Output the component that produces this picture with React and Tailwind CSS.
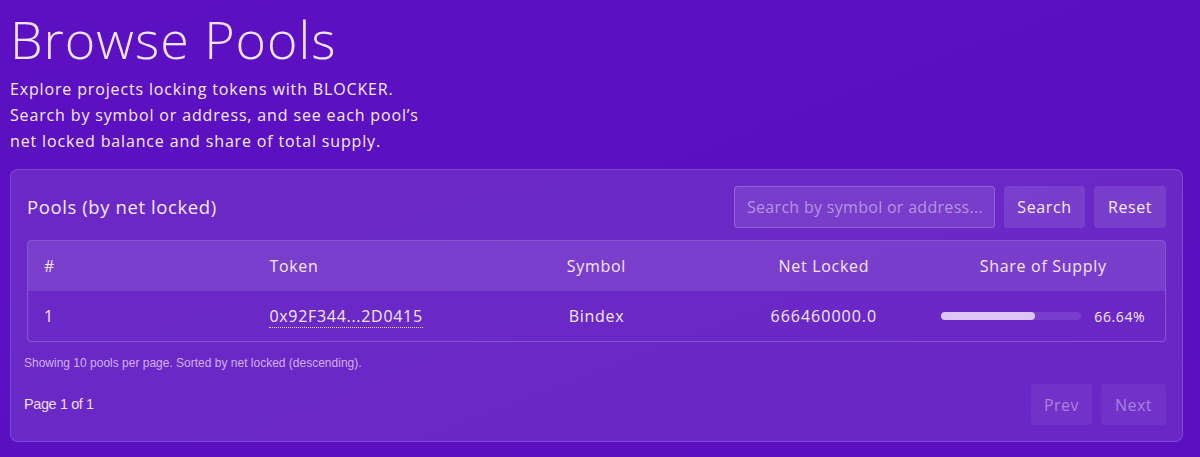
import React from 'react';

const rows = [
  { n: 1, token: '0x92F344...2D0415', symbol: 'Bindex', locked: '666460000.0', share: 66.64 },
];

export default function App() {
  return (
    <div className="min-h-screen w-full bg-gradient-to-br from-[#5c10c2] via-[#5a10c0] to-[#5b0fc0] px-[10px] pt-[8px] pb-4 text-[#f3e8ff] font-['Open_Sans',sans-serif]">
      <h1 className="text-[52px] leading-[62px] font-light tracking-[1px] text-[#f1e4ff]">Browse Pools</h1>
      <p className="mt-[6px] max-w-[420px] text-[16px] leading-[26px] tracking-[0.85px] text-[#f5ebff]">
        <span className="block">Explore projects locking tokens with BLOCKER.</span>
        <span className="block">Search by symbol or address, and see each pool’s</span>
        <span className="block">net locked balance and share of total supply.</span>
      </p>

      {/* Pools card */}
      <section className="mt-[15px] w-[1173px] rounded-lg border border-white/15 bg-white/[0.1] px-4 pt-4 pb-4">
        <div className="flex items-center justify-between">
          <h2 className="text-[18.5px] tracking-[0.6px] text-[#f3e8ff]">Pools (by net locked)</h2>
          <div className="flex items-center gap-[9px]">
            <input
              className="h-[42px] w-[261px] rounded border border-white/20 bg-white/10 px-3 text-[16px] tracking-[0.3px] text-white placeholder:text-white/45 outline-none"
              placeholder="Search by symbol or address..."
            />
            <button className="h-[42px] w-[81px] rounded bg-white/10 text-[16px] tracking-[0.6px] text-[#f5ebff]">Search</button>
            <button className="h-[42px] w-[72px] rounded bg-white/10 text-[16px] tracking-[0.6px] text-[#f5ebff]">Reset</button>
          </div>
        </div>

        <div className="mt-[12px] overflow-hidden rounded border border-white/20">
          <table className="w-full table-fixed border-collapse text-[16px] tracking-[0.7px]">
            <thead>
              <tr className="h-[50px] bg-white/10 text-[#f3e8ff]">
                <th className="pl-4 text-left font-normal">#</th>
                <th className="pl-[14px] text-left font-normal">Token</th>
                <th className="text-center font-normal">Symbol</th>
                <th className="text-center font-normal">Net Locked</th>
                <th className="pr-4 text-center font-normal">Share of Supply</th>
              </tr>
            </thead>
            <tbody>
              {rows.map((r) => (
                <tr key={r.n} className="h-[50px]">
                  <td className="pl-4">{r.n}</td>
                  <td className="pl-[14px]">
                    <span className="border-b border-dotted border-white/80">{r.token}</span>
                  </td>
                  <td className="text-center">{r.symbol}</td>
                  <td className="text-center tracking-[1px]">{r.locked}</td>
                  <td className="pr-4">
                    <div className="flex items-center justify-center gap-[13px]">
                      <div className="h-[8px] w-[140px] rounded-full bg-white/10">
                        <div className="h-full rounded-full bg-[#dcc6f5]" style={{ width: `${r.share}%` }} />
                      </div>
                      <span className="text-[14px] tracking-[0.6px]">{r.share.toFixed(2)}%</span>
                    </div>
                  </td>
                </tr>
              ))}
            </tbody>
          </table>
        </div>

        <p className="mt-[12px] -ml-[3px] text-[12px] text-[#e3cdfa]/85 font-['Liberation_Sans',sans-serif]">
          Showing 10 pools per page. Sorted by net locked (descending).
        </p>

        <div className="mt-[12px] flex items-center justify-between">
          <span className="-ml-[3px] text-[14.5px] text-[#eedfff] font-['Liberation_Sans',sans-serif] tracking-[-0.4px]">Page 1 of 1</span>
          <div className="flex gap-[9px]">
            <button className="h-[41px] w-[61px] rounded bg-white/5 text-[16px] tracking-[0.5px] text-white/40">Prev</button>
            <button className="h-[41px] w-[65px] rounded bg-white/5 text-[16px] tracking-[0.5px] text-white/40">Next</button>
          </div>
        </div>
      </section>
    </div>
  );
}
